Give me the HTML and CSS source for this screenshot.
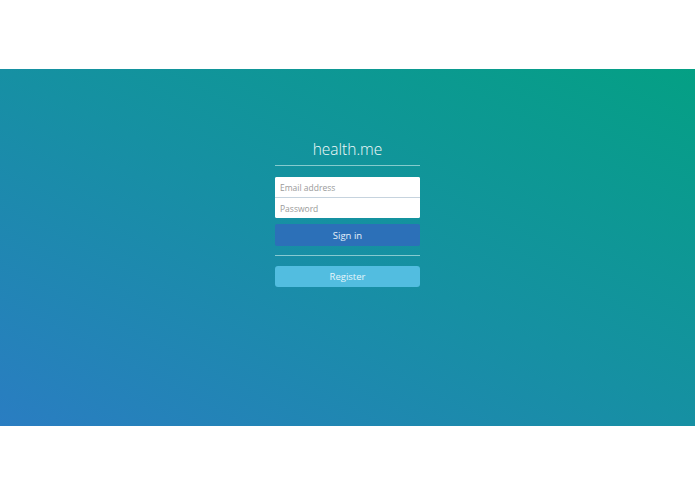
FILE: index.html
```html
<!DOCTYPE html>
<html>
<head>
<meta charset="utf-8">
<link rel="stylesheet" href="styles.css">
</head>
<body>
<div class="top"></div>
<main class="band">
  <form class="login">
    <h1 class="title">health.me</h1>
    <hr class="rule">
    <div class="fields">
      <input class="field field-first" type="text" placeholder="Email address">
      <input class="field field-second" type="password" placeholder="Password">
    </div>
    <button class="btn btn-signin" type="button">Sign in</button>
    <hr class="rule rule-2">
    <button class="btn btn-register" type="button">Register</button>
  </form>
</main>
<div class="bottom"></div>
</body>
</html>
```
FILE: styles.css
```css
html, body {
  margin: 0;
  padding: 0;
  background: #fff;
  font-family: "Open Sans", "Liberation Sans", sans-serif;
}
.top { height: 69px; }
.bottom { height: 68px; }
.band {
  height: 357px;
  box-sizing: border-box;
  padding-top: 70px;
  background: linear-gradient(to top right, #2a7dc2 0%, #1690a3 50%, #04a084 100%);
  display: flex;
  justify-content: center;
}
.login {
  width: 145px;
  display: flex;
  flex-direction: column;
}
.title {
  margin: 0;
  font-weight: 300;
  font-size: 15.5px;
  line-height: 20px;
  text-align: center;
  color: #f2fafa;
}
.rule {
  margin: 6px 0 0;
  border: 0;
  height: 1px;
  background: rgba(210, 240, 238, 0.6);
}
.fields {
  margin-top: 11px;
  display: flex;
  flex-direction: column;
  border-radius: 2px;
  overflow: hidden;
  background: #fff;
}
.field {
  box-sizing: border-box;
  height: 21px;
  margin: 0;
  border: 0;
  padding: 0 5px;
  font-family: inherit;
  font-size: 8.5px;
  color: #555;
  background: #fff;
  outline: none;
}
.field::placeholder { color: #9a9a9a; }
.field-first {
  border-bottom: 1px solid #c6d3de;
}
.field-second { height: 20px; }
.btn {
  box-sizing: border-box;
  border: 0;
  margin: 0;
  padding: 0;
  font-family: inherit;
  font-size: 9.5px;
  color: #fff;
  border-radius: 2px;
  cursor: pointer;
}
.btn-signin {
  margin-top: 6px;
  height: 22px;
  background: #2c70b8;
  color: #e6f0fa;
}
.rule-2 { margin-top: 9px; }
.btn-register {
  margin-top: 10px;
  height: 21px;
  background: #52bde0;
  color: #e6f6fb;
  border-radius: 3px;
}
```
